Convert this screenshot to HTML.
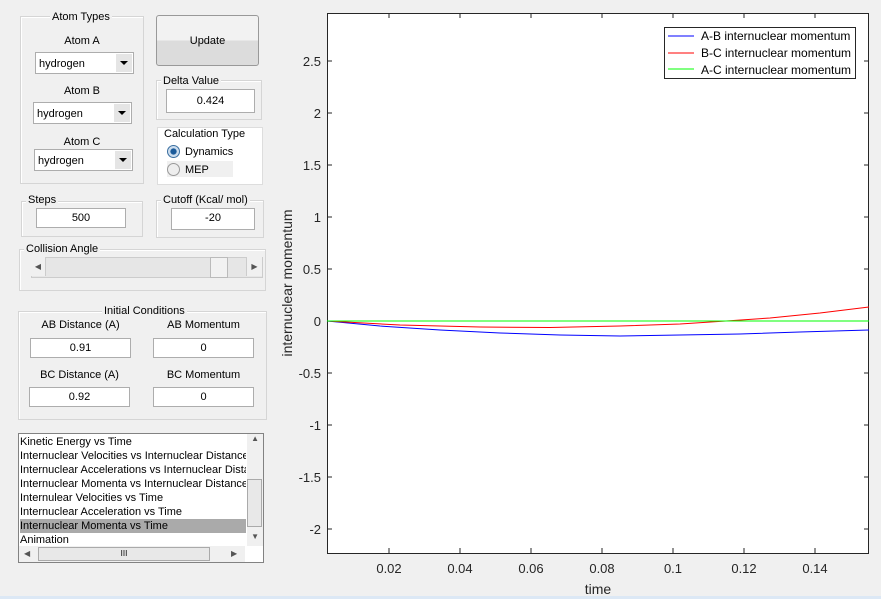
<!DOCTYPE html><html><head><style>
body{margin:0;width:881px;height:599px;background:#f0f0f0;font-family:"Liberation Sans",sans-serif;font-size:11px;color:#000;position:relative;overflow:hidden}
.a{position:absolute}
.grp{position:absolute;border:1px solid #d5d5d5;box-shadow:inset 1px 1px 0 #fff}
.lg{position:absolute;background:#f0f0f0;padding:0 2px;font-size:11px;white-space:nowrap}
.in{position:absolute;background:#fff;border:1px solid #adadad;text-align:center;line-height:18px;height:18px}
.dd{position:absolute;background:#fff;border:1px solid #adadad;height:20px;line-height:21px;padding-left:3px;box-sizing:border-box}
.dd b{position:absolute;right:1px;top:1px;width:16px;height:16px;background:#e5e5e5}
.dd b:after{content:"";position:absolute;left:4px;top:7px;border:4px solid transparent;border-top:4px solid #000}
.c{text-align:center}
</style></head><body>
<div class="grp" style="left:20px;top:16px;width:122px;height:166px"></div>
<div class="lg" style="left:50px;top:11px">Atom Types</div>
<div class="a c" style="left:20px;top:35px;width:124px">Atom A</div>
<div class="dd" style="left:35px;top:52px;width:99px;height:22px;line-height:22px">hydrogen<b style="height:18px"></b></div>
<div class="dd" style="left:33px;top:102px;width:99px;height:22px;line-height:22px">hydrogen<b style="height:18px"></b></div>
<div class="a c" style="left:20px;top:85px;width:124px">Atom B</div>
<div class="a c" style="left:20px;top:136px;width:124px">Atom C</div>
<div class="dd" style="left:34px;top:149px;width:99px;height:22px;line-height:22px">hydrogen<b style="height:18px"></b></div>
<div class="a c" style="left:156px;top:15px;width:101px;height:49px;border:1px solid #999;border-radius:3px;background:linear-gradient(#f2f2f2 50%,#dcdcdc 50%);line-height:51px">Update</div>
<div class="grp" style="left:156px;top:80px;width:104px;height:38px"></div>
<div class="lg" style="left:161px;top:75px">Delta Value</div>
<div class="in" style="left:166px;top:89px;width:87px;height:22px;line-height:22px">0.424</div>
<div class="a" style="left:157px;top:127px;width:104px;height:56px;background:#fff;border:1px solid #ddd"></div>
<div class="lg" style="left:162px;top:128px;background:#fff">Calculation Type</div>
<div class="a" style="left:167px;top:145px;width:11px;height:11px;border-radius:50%;border:1px solid #3b6fa0;background:radial-gradient(#1a5a9a 35%,#cde 45%)"></div>
<div class="a" style="left:185px;top:146px">Dynamics</div>
<div class="a" style="left:167px;top:161px;width:66px;height:16px;background:#f0f0f0"></div>
<div class="a" style="left:167px;top:163px;width:11px;height:11px;border-radius:50%;border:1px solid #999;background:#eee"></div>
<div class="a" style="left:185px;top:164px">MEP</div>
<div class="grp" style="left:21px;top:201px;width:120px;height:34px"></div>
<div class="lg" style="left:26px;top:194px">Steps</div>
<div class="in" style="left:36px;top:208px;width:88px">500</div>
<div class="grp" style="left:156px;top:200px;width:106px;height:36px"></div>
<div class="lg" style="left:161px;top:194px">Cutoff (Kcal/ mol)</div>
<div class="in" style="left:171px;top:208px;width:82px;height:20px">-20</div>
<div class="grp" style="left:19px;top:249px;width:245px;height:40px"></div>
<div class="lg" style="left:24px;top:243px">Collision Angle</div>
<div class="a" style="left:31px;top:257px;width:230px;height:19px;background:#e6e6e6;border:1px solid #ccc"></div>
<div class="a" style="left:31px;top:257px;width:14px;height:19px;background:#f0f0f0;border-right:1px solid #ccc;font-size:8px;line-height:19px;text-align:center;color:#555">◀</div>
<div class="a" style="left:246px;top:257px;width:15px;height:19px;background:#f0f0f0;border-left:1px solid #ccc;font-size:8px;line-height:19px;text-align:center;color:#555">▶</div>
<div class="a" style="left:210px;top:257px;width:16px;height:19px;background:#f2f2f2;border:1px solid #bbb"></div>
<div class="grp" style="left:18px;top:311px;width:247px;height:107px"></div>
<div class="lg" style="left:102px;top:305px">Initial Conditions</div>
<div class="a c" style="left:30px;top:319px;width:101px">AB Distance (A)</div>
<div class="a c" style="left:153px;top:319px;width:101px">AB Momentum</div>
<div class="in" style="left:30px;top:338px;width:99px">0.91</div>
<div class="in" style="left:153px;top:338px;width:99px">0</div>
<div class="a c" style="left:29px;top:369px;width:101px">BC Distance (A)</div>
<div class="a c" style="left:153px;top:369px;width:101px">BC Momentum</div>
<div class="in" style="left:29px;top:387px;width:99px">0.92</div>
<div class="in" style="left:153px;top:387px;width:99px">0</div>
<div class="a" style="left:18px;top:433px;width:244px;height:128px;background:#fff;border:1px solid #828282;line-height:14px;overflow:hidden">
<div style="position:absolute;left:1px;top:1px;white-space:nowrap;width:226px;overflow:hidden">Kinetic Energy vs Time<br>Internuclear Velocities vs Internuclear Distance<br>Internuclear Accelerations vs Internuclear Distance<br>Internuclear Momenta vs Internuclear Distance<br>Internulear Velocities vs Time<br>Internuclear Acceleration vs Time<br><span style="display:block;background:#aaa;width:226px">Internuclear Momenta vs Time</span>Animation</div>
<div style="position:absolute;right:0;top:0;width:16px;height:112px;background:#f0f0f0"></div>
<div style="position:absolute;right:4px;top:-2px;font-size:8px;color:#555">▲</div>
<div style="position:absolute;right:4px;top:96px;font-size:8px;color:#555">▼</div>
<div style="position:absolute;right:1px;top:45px;width:13px;height:46px;background:#e8e8e8;border:1px solid #aaa"></div>
<div style="position:absolute;left:0;top:112px;width:226px;height:16px;background:#f0f0f0"></div>
<div style="position:absolute;left:5px;top:113px;font-size:8px;color:#555">◀</div>
<div style="position:absolute;left:212px;top:113px;font-size:8px;color:#555">▶</div>
<div style="position:absolute;left:19px;top:113px;width:170px;height:12px;background:#e8e8e8;border:1px solid #aaa;font-size:8px;text-align:center;line-height:12px">III</div>
</div>
<div class="a" style="left:0;top:596px;width:881px;height:3px;background:#dce8f5"></div>
<svg class="a" style="left:0;top:0" width="881" height="599" font-family="Liberation Sans" font-size="13" fill="#262626">
<rect x="327.5" y="13.5" width="541" height="540" fill="#fff" stroke="#262626"/>
<g stroke="#262626">
<path d="M389 13v5M460 13v5M531 13v5M602 13v5M673 13v5M744 13v5M815 13v5M389 553v-5M460 553v-5M531 553v-5M602 553v-5M673 553v-5M744 553v-5M815 553v-5"/>
<path d="M327 61h5M327 113h5M327 165h5M327 217h5M327 269h5M327 321h5M327 373h5M327 425h5M327 477h5M327 529h5M869 61h-5M869 113h-5M869 165h-5M869 217h-5M869 269h-5M869 321h-5M869 373h-5M869 425h-5M869 477h-5M869 529h-5"/>
</g>
<g text-anchor="end"><text x="321" y="66">2.5</text><text x="321" y="118">2</text><text x="321" y="170">1.5</text><text x="321" y="222">1</text><text x="321" y="274">0.5</text><text x="321" y="326">0</text><text x="321" y="378">-0.5</text><text x="321" y="430">-1</text><text x="321" y="482">-1.5</text><text x="321" y="534">-2</text></g>
<g text-anchor="middle"><text x="389" y="573">0.02</text><text x="460" y="573">0.04</text><text x="531" y="573">0.06</text><text x="602" y="573">0.08</text><text x="673" y="573">0.1</text><text x="744" y="573">0.12</text><text x="815" y="573">0.14</text>
<text x="598" y="594" font-size="14">time</text>
<text transform="translate(292 283) rotate(-90)" font-size="14">internuclear momentum</text></g>
<polyline points="327,321 380,326 440,330 500,333 560,335 620,336 680,335 740,334 800,332 869,330" fill="none" stroke="#00f"/>
<polyline points="327,321 400,325 480,327 550,327.5 620,326 680,324 726,321 770,318 820,313 869,307" fill="none" stroke="#f00"/>
<path d="M327 321H869" stroke="#0f0"/>
<rect x="664.5" y="27.5" width="191" height="51" fill="#fff" stroke="#262626"/>
<path d="M668 36h26" stroke="#00f"/><path d="M668 53h26" stroke="#f00"/><path d="M668 69h26" stroke="#0f0"/>
<g font-size="12" fill="#000"><text x="701" y="40">A-B internuclear momentum</text><text x="701" y="57">B-C internuclear momentum</text><text x="701" y="74">A-C internuclear momentum</text></g>
</svg>
</body></html>
